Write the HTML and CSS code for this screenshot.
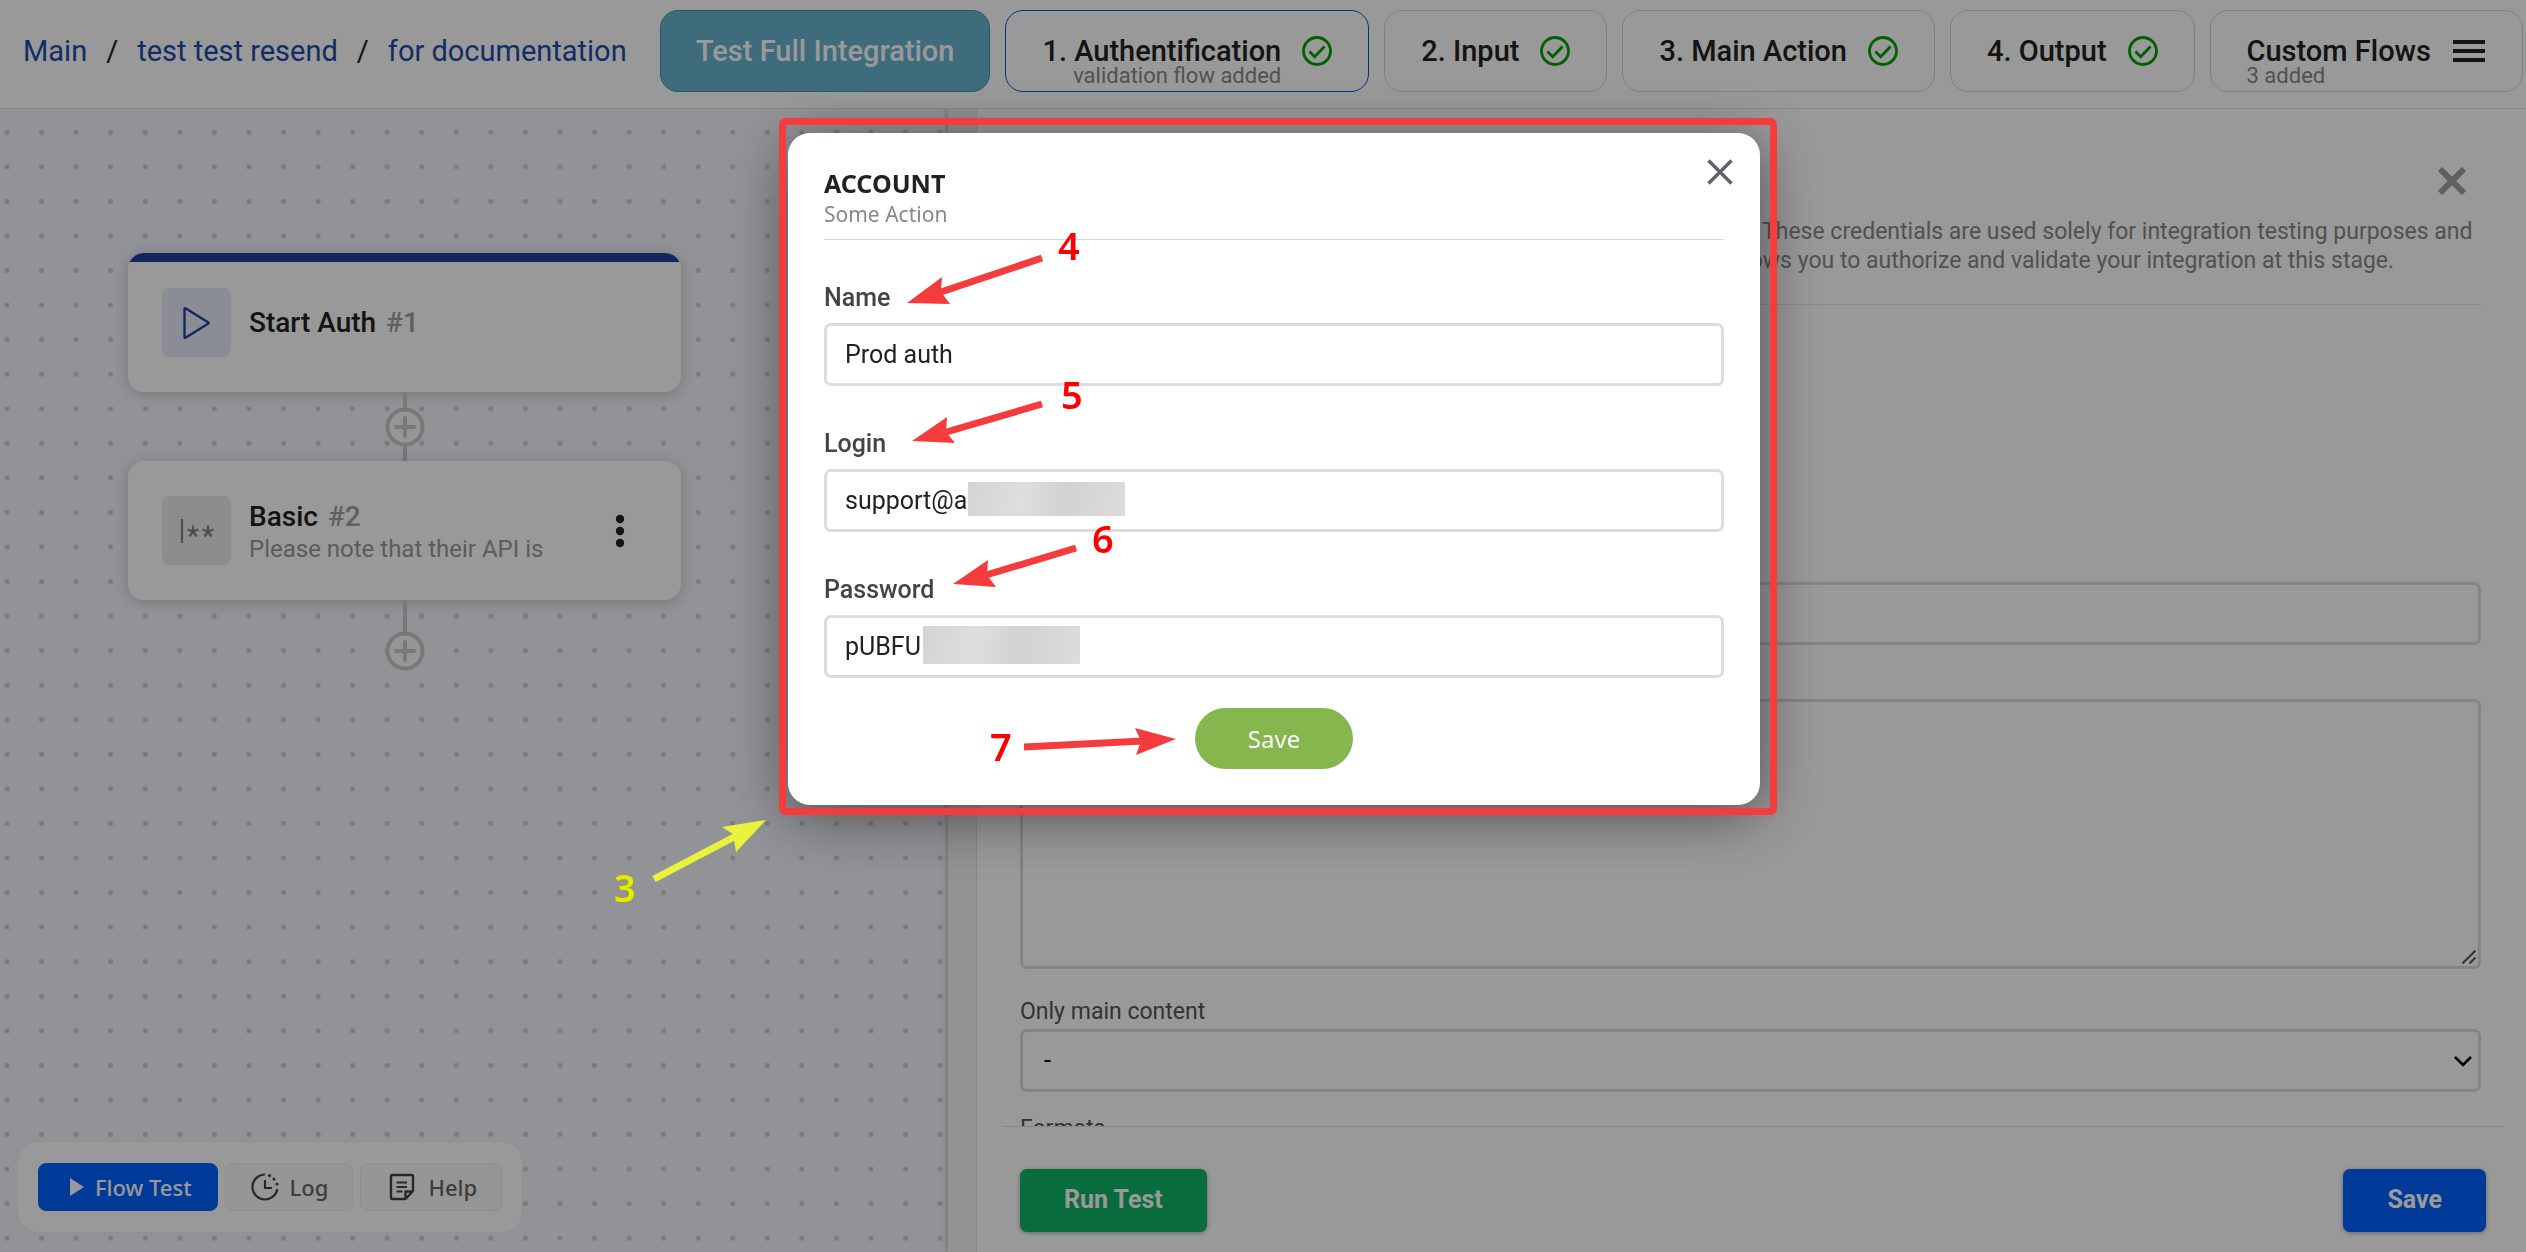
FILE: index.html
```html
<!DOCTYPE html>
<html lang="en">
<head>
<meta charset="utf-8">
<meta name="viewport" content="width=device-width, initial-scale=1">
<title>for documentation</title>
<link rel="stylesheet" href="styles.css">
</head>
<body>
<svg class="defs" width="0" height="0" aria-hidden="true">
  <symbol id="check" viewBox="0 0 30 30"><circle cx="15" cy="15" r="13.5" fill="none" stroke="#00a000" stroke-width="2.8"/><path d="M7.5 15.5l5.2 5.2L22.5 10.5" fill="none" stroke="#00a000" stroke-width="2.8"/></symbol>
  <symbol id="plus" viewBox="0 0 40 40"><circle cx="20" cy="20" r="17.5" fill="#fbfbfb" stroke="#c8c8c8" stroke-width="4"/><path d="M20 11v18M11 20h18" fill="none" stroke="#c8c8c8" stroke-width="4" stroke-linecap="round"/></symbol>
</svg>

<header class="topbar">
  <nav class="crumbs" aria-label="Breadcrumb">
    <a href="#">Main</a><span>/</span><a href="#">test test resend</a><span>/</span><a href="#">for documentation</a>
  </nav>
  <button class="tab tab-test">Test Full Integration</button>
  <button class="tab tab-active"><span class="tab-label">1. Authentification<small class="right">validation flow added</small></span><svg class="check"><use href="#check"/></svg></button>
  <button class="tab"><span class="tab-label">2. Input</span><svg class="check"><use href="#check"/></svg></button>
  <button class="tab"><span class="tab-label">3. Main Action</span><svg class="check"><use href="#check"/></svg></button>
  <button class="tab"><span class="tab-label">4. Output</span><svg class="check"><use href="#check"/></svg></button>
  <button class="tab"><span class="tab-label">Custom Flows<small>3 added</small></span><svg class="burger" viewBox="0 0 34 30"><path d="M1 6h32M1 15h32M1 24h32" stroke="#222" stroke-width="4"/></svg></button>
</header>

<main class="workspace">
  <section class="canvas">
    <svg class="grid" aria-hidden="true">
      <defs><pattern id="dots" x="-10.300" y="6" width="34.560" height="34.560" patternUnits="userSpaceOnUse"><rect x="15" y="15" width="4.600" height="4.600" rx="1" fill="#cbcbcb"/></pattern></defs>
      <rect width="100%" height="100%" fill="url(#dots)"/>
    </svg>
    <div class="flow">
      <article class="node node-start">
        <span class="node-icon start"><svg width="28" height="34" viewBox="0 0 28 34"><path d="M2.500 2.200L25 16.200Q26.200 17 25 17.800L2.500 31.800Q1.500 32 1.500 31V3Q1.500 2 2.500 2.200z" fill="none" stroke="#233f9e" stroke-width="2.400" stroke-linejoin="round"/></svg></span>
        <div class="node-text"><h2>Start Auth <span>#1</span></h2></div>
      </article>
      <div class="link"><svg><use href="#plus"/></svg></div>
      <article class="node">
        <span class="node-icon"><svg width="34" height="26" viewBox="0 0 34 26"><path d="M2 1v24M13 7.500v6M13 13.500l-5.500-2M13 13.500l5.500-2M13 13.500l-3.500 5M13 13.500l3.500 5M28 7.500v6M28 13.500l-5.500-2M28 13.500l5.500-2M28 13.500l-3.500 5M28 13.500l3.500 5" fill="none" stroke="#828282" stroke-width="2.200"/></svg></span>
        <div class="node-text"><h2>Basic <span>#2</span></h2><p>Please note that their API is</p></div>
        <button class="more" aria-label="More"><svg width="12" height="34" viewBox="0 0 12 34"><g fill="#222"><circle cx="6" cy="5" r="4.200"/><circle cx="6" cy="17" r="4.200"/><circle cx="6" cy="29" r="4.200"/></g></svg></button>
      </article>
      <div class="link link-end"><svg><use href="#plus"/></svg></div>
    </div>
    <div class="tools">
      <button class="tool tool-run"><svg width="14" height="18" viewBox="0 0 14 18"><path d="M0 0l14 9L0 18z" fill="#fff"/></svg>Flow Test</button>
      <button class="tool"><svg width="28" height="28" viewBox="0 0 28 28"><path d="M14 1.500A12.500 12.500 0 1 0 26.300 16" fill="none" stroke="#444" stroke-width="2.200"/><path d="M14 7v8h7" fill="none" stroke="#444" stroke-width="2.200"/><g fill="#444"><circle cx="18.500" cy="2.600" r="1.600"/><circle cx="23" cy="6" r="1.600"/><circle cx="26" cy="11" r="1.600"/></g></svg>Log</button>
      <button class="tool tool-help"><svg width="26" height="28" viewBox="0 0 26 28"><path d="M2 3.500Q2 2 3.500 2H22.500Q24 2 24 3.500V18L16.500 26H3.500Q2 26 2 24.500zM24 18.500H16.500V26" fill="none" stroke="#444" stroke-width="2.400" stroke-linejoin="round"/><path d="M7.500 9.500h10.500M7.500 14h10.500M7.500 18.500h6" stroke="#444" stroke-width="2.200"/></svg>Help</button>
    </div>
  </section>
  <div class="splitter"></div>
  <section class="panel">
    <div class="panel-body">
      <div class="panel-head">
        <button class="panel-close" aria-label="Close panel"><svg width="28" height="28" viewBox="0 0 28 28"><path d="M2 2l24 24M26 2L2 26" stroke="#a0a0a0" stroke-width="6"/></svg></button>
        <p>These credentials are used solely for integration testing purposes and<br>allows you to authorize and validate your integration at this stage.</p>
      </div>
      <input class="field" type="text" aria-label="Value">
      <div class="area-box"><textarea class="field area" aria-label="Details"></textarea><svg width="14" height="14" viewBox="0 0 14 14"><path d="M.5 13.500l13-13M7.500 13.500l6-6" stroke="#555" stroke-width="2"/></svg></div>
      <label for="only">Only main content</label>
      <div class="select"><select id="only" class="field"><option>-</option></select><svg width="20" height="12" viewBox="0 0 20 12"><path d="M2 2l8 8 8-8" fill="none" stroke="#000" stroke-width="2.600"/></svg></div>
      <label class="next">Formats</label>
    </div>
    <footer class="panel-foot">
      <button class="run">Run Test</button>
      <button class="save">Save</button>
    </footer>
  </section>
</main>

<div class="overlay">
  <form class="modal" role="dialog" aria-labelledby="dlg">
    <header class="modal-head">
      <h1 id="dlg">ACCOUNT</h1>
      <p>Some Action</p>
    </header>
    <button type="button" class="modal-close" aria-label="Close"><svg width="26" height="26" viewBox="0 0 26 26"><path d="M1.500 1.500l23 23M24.500 1.500l-23 23" stroke="#5f6068" stroke-width="3.400"/></svg></button>
    <label for="name">Name</label>
    <input id="name" class="field" type="text" value="Prod auth">
    <label for="login">Login</label>
    <div class="masked"><input id="login" class="field" type="text" value="support@a"><span class="mask mask-login"></span></div>
    <label for="pass">Password</label>
    <div class="masked"><input id="pass" class="field" type="text" value="pUBFU"><span class="mask mask-pass"></span></div>
    <button type="button" class="modal-save">Save</button>

    <svg class="notes" viewBox="0 0 972 672" aria-hidden="true">
      <rect x="-5.500" y="-11.500" width="991" height="690" rx="3" fill="none" stroke="#f43c3c" stroke-width="7"/>
      <g stroke="#f43c3c" fill="#f43c3c" stroke-width="7">
        <path d="M254 125L150 160"/><path stroke="none" d="M119 170L154 144 153 159 162 171z"/>
        <path d="M254 271L155 300"/><path stroke="none" d="M124 308L159 284 158 299 167 310z"/>
        <path d="M288 415L195 443"/><path stroke="none" d="M165 451L200 427 199 442 208 454z"/>
        <path d="M236 614L355 608"/><path stroke="none" d="M388 606L347 595 353 608 348 622z"/>
      </g>
      <path d="M-134 746L-50 702" stroke="#e8f33c" stroke-width="7"/><path fill="#e8f33c" d="M-22 687L-66 694 -55 701 -52 719z"/>
      <g class="digits"><text x="270" y="127">4</text><text x="273" y="276">5</text><text x="304" y="420">6</text><text x="202" y="628">7</text><text class="yellow" x="-174" y="769">3</text></g>
    </svg>
  </form>
</div>
</body>
</html>
```
FILE: styles.css
```css
* { box-sizing: border-box; }
body { margin: 0; height: 100vh; display: flex; flex-direction: column; overflow: hidden; background: #fff; color: #222; font-family: Roboto, sans-serif; font-size: 23px; }
button { font: inherit; border: 0; background: none; padding: 0; margin: 0; }
h1, h2, p { margin: 0; }
svg { flex: none; display: block; }
.defs { position: absolute; }

.topbar { position: relative; z-index: 1; flex: none; height: 109px; display: flex; align-items: flex-start; padding: 10px 0 0 23px; border-bottom: 1px solid #e4e4e4; background: #fff; overflow: hidden; }
.crumbs { display: flex; gap: 19px; width: 637px; flex: none; font-size: 29px; line-height: 82px; white-space: nowrap; }
.crumbs a { color: #1d4ba8; text-decoration: none; }
.tab { flex: none; display: flex; align-items: flex-start; gap: 21px; height: 82px; margin-right: 15px; padding: 25px 36px 0; border: 1px solid #c9d8f0; border-radius: 18px; font-size: 29px; font-weight: 500; line-height: 30px; color: #222; white-space: nowrap; }
.tab-active { border-color: #0055cc; }
.tab-test { background: #68b4d0; border-color: #4792ac; color: #fff; padding: 25px 35px 0; }
.tab-label { display: flex; flex-direction: column; text-align: left; }
.tab small { font-size: 22px; font-weight: 400; line-height: 19px; color: #888; }
.tab small.right { text-align: right; }
.check { width: 30px; height: 30px; }
.burger { width: 34px; height: 30px; }

.workspace { flex: 1; min-height: 0; display: flex; }
.canvas { position: relative; flex: 0 0 948px; display: flex; flex-direction: column; justify-content: space-between; background: #f4f5fb; }
.grid { position: absolute; inset: 0; width: 100%; height: 100%; }
.flow { position: relative; width: 553px; margin: 144px 0 0 128px; display: flex; flex-direction: column; }
.node { display: flex; align-items: center; height: 139px; padding: 0 55px 0 34px; background: #fff; border-radius: 16px; box-shadow: 0 2px 16px rgba(0,0,0,.2); overflow: hidden; }
.node-start { background: linear-gradient(#233f9e, #233f9e) top / 100% 9px no-repeat #fff; }
.node-icon { flex: none; width: 69px; height: 69px; margin-right: 18px; display: flex; align-items: center; justify-content: center; border-radius: 8px; background: #ebebeb; }
.node-icon.start { background: #e8ecfa; }
.node-text { flex: 1; }
.node h2 { font-size: 28px; font-weight: 500; line-height: 36px; }
.node h2 span { color: #a0a0a0; margin-left: 3px; }
.node p { font-size: 24px; line-height: 28px; color: #999; }
.link { height: 69px; display: flex; justify-content: center; align-items: center; background: linear-gradient(#c8c8c8, #c8c8c8) center / 4px 100% no-repeat; }
.link svg { width: 40px; height: 40px; }
.link-end { height: 71px; align-items: flex-end; background-size: 4px 34px; background-position: top; }
.tools { position: relative; align-self: flex-start; display: flex; gap: 7px; margin: 0 0 19px 17px; padding: 21px 20px; background: #fff; border: 1px solid #eee; border-radius: 20px; }
.tool { display: flex; align-items: center; gap: 11px; height: 48px; padding: 0 24px 0 25px; border: 1px solid #ededed; border-radius: 8px; background: #fafafa; color: #666; font: 500 22px "Noto Sans", sans-serif; }
.tool-run { padding: 0 25px 0 31px; background: #0061ff; border-color: #0061ff; color: #fff; }
.tool-help { padding-left: 28px; gap: 13px; }

.splitter { position: relative; flex: 0 0 29px; background: #f3f3f3; border-right: 1px solid #e4e4e4; box-shadow: -1px 0 5px rgba(0,0,0,.25); }
.panel { position: relative; flex: 1; min-width: 0; display: flex; flex-direction: column; background: #fff; }
.panel-body { flex: 1; min-height: 0; overflow: hidden; display: flex; flex-direction: column; padding: 0 45px 0 43px; }
.panel-head { flex: none; height: 196px; display: flex; flex-direction: column; align-items: flex-end; padding-top: 58px; margin-bottom: 277px; border-bottom: 1px solid #e4e4e4; }
.panel-close { margin-right: 15px; }
.panel-head p { align-self: stretch; margin: 22px 0 0 706px; text-indent: 36px; line-height: 29px; color: #888; white-space: nowrap; }
.field { display: block; width: 100%; height: 63px; border: 3px solid #dcdcdc; border-radius: 7px; background: #fff; padding: 0 18px; font: 25px Roboto, sans-serif; color: #222; outline: 0; }
.panel .field { flex: none; }
.area-box { flex: none; position: relative; margin: 54px 0 27px; }
.area-box svg { position: absolute; right: 5px; bottom: 5px; }
.panel .area { height: 270px; padding: 16px 18px; resize: none; }
.panel label { flex: none; line-height: 32px; margin-bottom: 1px; color: #555; }
.panel .next { margin-top: 21px; }
.select { flex: none; position: relative; }
.select select { appearance: none; padding: 0 21px; color: #000; }
.select svg { position: absolute; right: 8px; top: 26px; pointer-events: none; }
.panel-foot { flex: none; display: flex; justify-content: space-between; height: 126px; margin: 0 22px 0 25px; padding: 42px 18px 0; border-top: 1px solid #e4e4e4; }
.panel-foot button { height: 63px; padding: 0 44px 3px; border-radius: 7px; color: #fff; font-size: 25px; font-weight: 700; box-shadow: 0 1px 4px rgba(0,0,0,.35); }
.run { background: #0eb465; }
.save { background: #0061ff; }

.overlay { position: fixed; inset: 0; z-index: 2; display: flex; justify-content: center; align-items: flex-start; padding: 133px 0 0 22px; background: rgba(0,0,0,.4); }
.modal { position: relative; display: flex; flex-direction: column; width: 972px; padding: 35px 36px 36px; background: #fff; border-radius: 22px; box-shadow: 0 10px 60px rgba(0,0,0,.5); font-family: Roboto, sans-serif; }
.modal-head { padding-bottom: 9px; margin-bottom: 26px; border-bottom: 1px solid #d8d8d8; font-family: "Noto Sans", sans-serif; }
.modal-head h1 { font-size: 25px; font-weight: 700; line-height: 31px; }
.modal-head p { font-size: 21px; line-height: 31px; color: #888; }
.modal-close { position: absolute; right: 27px; top: 26px; }
.modal label { font-size: 25px; line-height: 32px; margin: 16px 0 9px; font-weight: 500; color: #444; }
.modal .field + label, .modal .masked + label { margin-top: 42px; }
.masked { position: relative; }
.mask { position: absolute; width: 157px; background: linear-gradient(100deg, #d4d4d4, #dedede 35%, #d2d2d2 60%, #dcdcdc); }
.mask-login { left: 144px; top: 13px; height: 34px; }
.mask-pass { left: 99px; top: 11px; height: 38px; }
.modal-save { align-self: center; width: 158px; height: 61px; margin-top: 30px; border-radius: 31px; background: #85b74e; color: #fff; font: 24px "Noto Sans", sans-serif; }
.notes { position: absolute; left: 0; top: 0; width: 972px; height: 672px; overflow: visible; pointer-events: none; }
.digits { font: 600 38px "Noto Sans", sans-serif; fill: #ff0000; }
.digits .yellow { fill: #d4f500; stroke: #e08020; stroke-width: 1px; paint-order: stroke; }
```
